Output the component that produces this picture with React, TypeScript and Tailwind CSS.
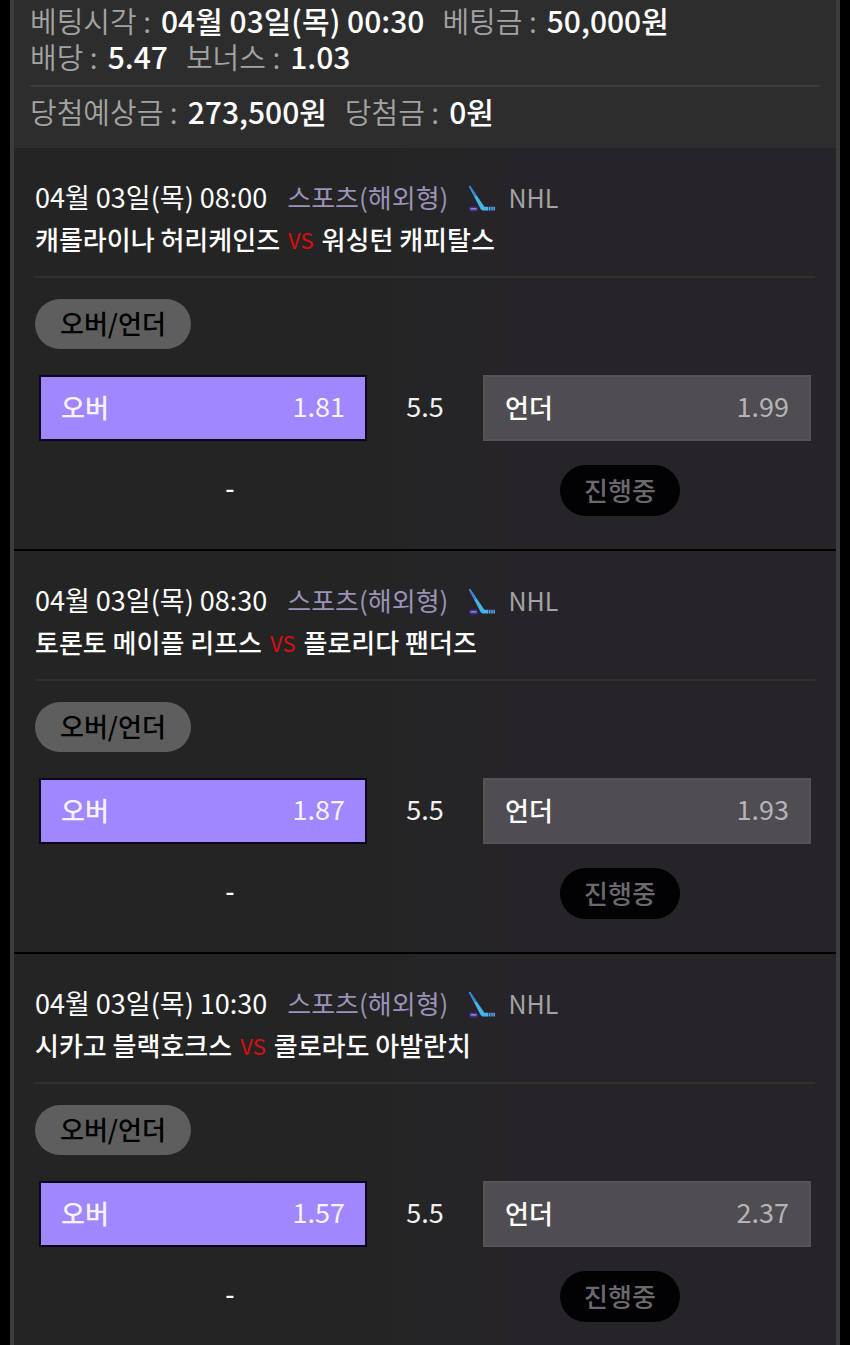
import React from 'react';

interface Pick {
    time: string
    home: string
    away: string
    over: string
    under: string
    line: string
}

const picks: Pick[] = [
    { time: '04월 03일(목) 08:00', home: '캐롤라이나 허리케인즈', away: '워싱턴 캐피탈스', over: '1.81', under: '1.99', line: '5.5' },
    { time: '04월 03일(목) 08:30', home: '토론토 메이플 리프스', away: '플로리다 팬더즈', over: '1.87', under: '1.93', line: '5.5' },
    { time: '04월 03일(목) 10:30', home: '시카고 블랙호크스', away: '콜로라도 아발란치', over: '1.57', under: '2.37', line: '5.5' },
];

const HockeyStick = () => (
    <svg width="28" height="28" viewBox="0 0 28 28" fill="none" aria-hidden="true">
        <path d="M1.5 1.5 14.6 23.8h12.4" stroke="#1b3566" strokeWidth="3.2" opacity="0.6" />
        <path d="M.8 1.2 2 .8 16.4 21.8H20v3.8h-5.6L12.6 24z" fill="#45b6ea" />
        <path d="M.8 1.2 2 .8 8.4 10.1 7 11.9z" fill="#3f7fd0" />
        <path d="M20.6 21.8h1.9v3.8h-1.9zM23.2 21.8h1.6v3.8h-1.6zM25.4 21.8h1.6v3.8h-1.6z" fill="#5a9edc" />
        <rect x="1.2" y="21.4" width="8.6" height="5" rx="1.8" fill="#43308a" />
        <rect x="2.6" y="23.2" width="5.8" height="1.3" fill="#a394e6" />
    </svg>
);

const Summary = ({ label, value }: { label: string, value: string }) => (
    <div className="flex items-center gap-2.5 text-[#a3a3a3]">
        <span className="text-[29px] font-[350]">{label} :</span>
        <span className="text-[30px] font-medium text-white">{value}</span>
    </div>
);

const PickCard = ({ pick }: { pick: Pick }) => (
    <section className="border-b-2 border-black bg-linear-to-r from-[#242424] from-40% to-[#262428] to-60% px-[21px] pt-7 pb-[33px] last:border-b-0 last:pb-[23px]">
        <div className="flex items-center text-[27px] leading-[42px]">
            <span className="text-white">{pick.time}</span>
            <span className="ml-5 text-[26px] text-[#9a92b8]">스포츠(해외형)</span>
            <span className="mr-3 ml-5 pt-1"><HockeyStick /></span>
            <span className="text-[25px] text-[#a3a3a3]">NHL</span>
        </div>
        <div className="flex items-center gap-2 text-[26px] leading-[42px] font-medium text-white">
            <span>{pick.home}</span>
            <span className="text-[22px] font-normal text-[#d90f0f]">VS</span>
            <span>{pick.away}</span>
        </div>
        <div className="mt-4 border-t-2 border-[#303030] pt-[21px]">
            <span className="inline-flex h-[50px] items-center rounded-full bg-[#5e5e5e] px-[25px] pb-[3px] text-[26px] font-medium text-black">오버/언더</span>
        </div>
        <div className="mt-[26px] flex items-center px-1 text-[27px]">
            <button className="flex h-[66px] flex-1 items-center justify-between border-2 border-[#0b0620] bg-[#a087ff] px-5 pb-1 text-[#f6f2ff]">
                <span className="text-[26px] font-medium">오버</span>
                <span>{pick.over}</span>
            </button>
            <span className="w-[116px] pb-1 text-center text-[#f0f0f0]">{pick.line}</span>
            <button className="flex h-[66px] flex-1 items-center justify-between border-2 border-[#555358] bg-[#4f4d51] px-5 pb-1 text-[#b5b3b8]">
                <span className="text-[26px] font-medium text-white">언더</span>
                <span>{pick.under}</span>
            </button>
        </div>
        <div className="mt-6 grid grid-cols-2 items-center justify-items-center text-[26px] font-medium">
            <span className="pb-2 text-white">-</span>
            <span className="flex h-[51px] items-center rounded-full bg-[#020204] px-6 pb-[3px] text-[#6b696e]">진행중</span>
        </div>
    </section>
);

const App = () => {
    return (
        <div className="min-h-screen bg-black px-2.5 font-['Noto_Sans_CJK_KR',sans-serif]">
            <main className="border-x-4 border-[#3c3c3c]">
                <header className="bg-[#2d2d2d] px-4">
                    <div className="pt-0.5 pb-[11px] leading-9">
                        <div className="flex gap-[18px]">
                            <Summary label="베팅시각" value="04월 03일(목) 00:30" />
                            <Summary label="베팅금" value="50,000원" />
                        </div>
                        <div className="flex gap-[18px]">
                            <Summary label="배당" value="5.47" />
                            <Summary label="보너스" value="1.03" />
                        </div>
                    </div>
                    <div className="flex gap-[18px] border-t-2 border-[#3c3c3c] pt-1.5 pb-[19px] leading-9">
                        <Summary label="당첨예상금" value="273,500원" />
                        <Summary label="당첨금" value="0원" />
                    </div>
                </header>
                {picks.map((pick) => (
                    <PickCard key={pick.time} pick={pick} />
                ))}
            </main>
        </div>
    );
};

export default App;
